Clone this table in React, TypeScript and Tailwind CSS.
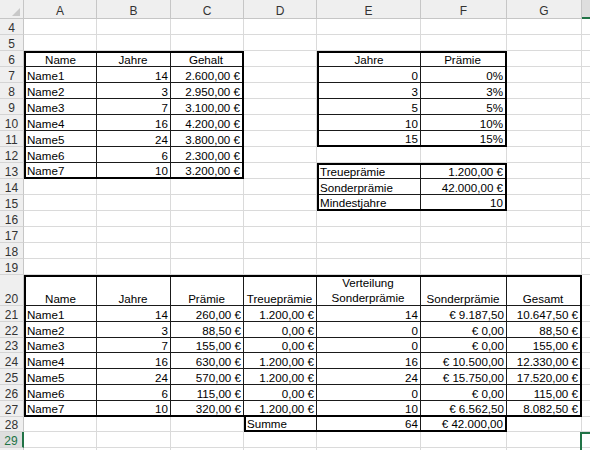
import React from "react";

type A = "l" | "r" | "c";
type Cell = { t: string; a: A; w?: boolean };

const l = (t: string): Cell => ({ t, a: "l" });
const r = (t: string): Cell => ({ t, a: "r" });
const c = (t: string): Cell => ({ t, a: "c" });

const COLS = ["A", "B", "C", "D", "E", "F", "G", "H"];
const ROWS: number[] = [];
for (let i = 4; i <= 30; i++) ROWS.push(i);

function covered(row: number, col: number) {
  if (row >= 6 && row <= 13 && col >= 1 && col <= 3) return true;
  if (row >= 6 && row <= 11 && col >= 5 && col <= 6) return true;
  if (row >= 13 && row <= 15 && col >= 5 && col <= 6) return true;
  if (row >= 20 && row <= 27 && col >= 1 && col <= 7) return true;
  if (row === 28 && col >= 4 && col <= 6) return true;
  return false;
}

const t1: Cell[][] = [
  [c("Name"), c("Jahre"), c("Gehalt")],
  [l("Name1"), r("14"), r("2.600,00 €")],
  [l("Name2"), r("3"), r("2.950,00 €")],
  [l("Name3"), r("7"), r("3.100,00 €")],
  [l("Name4"), r("16"), r("4.200,00 €")],
  [l("Name5"), r("24"), r("3.800,00 €")],
  [l("Name6"), r("6"), r("2.300,00 €")],
  [l("Name7"), r("10"), r("3.200,00 €")],
];

const t2: Cell[][] = [
  [c("Jahre"), c("Prämie")],
  [r("0"), r("0%")],
  [r("3"), r("3%")],
  [r("5"), r("5%")],
  [r("10"), r("10%")],
  [r("15"), r("15%")],
];

const t3: Cell[][] = [
  [l("Treueprämie"), r("1.200,00 €")],
  [l("Sonderprämie"), r("42.000,00 €")],
  [l("Mindestjahre"), r("10")],
];

const t4: Cell[][] = [
  [
    c("Name"),
    c("Jahre"),
    c("Prämie"),
    c("Treueprämie"),
    { t: "Verteilung\nSonderprämie", a: "c", w: true },
    c("Sonderprämie"),
    c("Gesamt"),
  ],
  [l("Name1"), r("14"), r("260,00 €"), r("1.200,00 €"), r("14"), r("€ 9.187,50"), r("10.647,50 €")],
  [l("Name2"), r("3"), r("88,50 €"), r("0,00 €"), r("0"), r("€ 0,00"), r("88,50 €")],
  [l("Name3"), r("7"), r("155,00 €"), r("0,00 €"), r("0"), r("€ 0,00"), r("155,00 €")],
  [l("Name4"), r("16"), r("630,00 €"), r("1.200,00 €"), r("16"), r("€ 10.500,00"), r("12.330,00 €")],
  [l("Name5"), r("24"), r("570,00 €"), r("1.200,00 €"), r("24"), r("€ 15.750,00"), r("17.520,00 €")],
  [l("Name6"), r("6"), r("115,00 €"), r("0,00 €"), r("0"), r("€ 0,00"), r("115,00 €")],
  [l("Name7"), r("10"), r("320,00 €"), r("1.200,00 €"), r("10"), r("€ 6.562,50"), r("8.082,50 €")],
];

const t5: Cell[][] = [[l("Summe"), r("64"), r("€ 42.000,00")]];

function Tbl({ cls, data }: { cls: string; data: Cell[][] }) {
  const nr = data.length;
  const nc = data[0].length;
  return (
    <div className={`grid bg-white border-black ${cls}`}>
      {data.flatMap((row, ri) =>
        row.map((cell, ci) => {
          const classes = ["flex items-end overflow-hidden min-w-0 pl-[1px] pr-[2px]"];
          if (ci < nc - 1) classes.push("border-r border-r-[#1a1a1a]");
          if (ri < nr - 1) classes.push("border-b border-b-[#1a1a1a]");
          if (cell.a === "r") classes.push("justify-end text-right");
          else if (cell.a === "c") classes.push("justify-center text-center");
          else classes.push("justify-start");
          classes.push(cell.w ? "whitespace-pre-line leading-[15px]" : "whitespace-nowrap leading-[12px]");
          return (
            <div key={`${ri}-${ci}`} className={classes.join(" ")}>
              <span>{cell.t}</span>
            </div>
          );
        })
      )}
    </div>
  );
}

function Corner() {
  return (
    <div className="relative bg-[#efefef] border-r border-b border-[#c6c6c6]">
      <svg className="absolute left-0 top-0" width="24" height="19" viewBox="0 0 24 19">
        <polygon points="20,8 20,16 12,16" fill="#c8c8c8" />
      </svg>
    </div>
  );
}

export default function App() {
  const items: React.ReactNode[] = [];

  // header row
  items.push(<Corner key="corner" />);
  COLS.forEach((col) => {
    const sel = col === "H";
    items.push(
      <div
        key={`h-${col}`}
        className={
          sel
            ? "flex items-end justify-center bg-[#dedede] border-r border-[#c6c6c6] border-b-2 border-b-[#217346] text-[#217346] text-[12px] leading-[12px] pb-[1px]"
            : "flex items-end justify-center bg-[#efefef] border-r border-b border-[#c6c6c6] text-[#333] text-[12px] leading-[12px] pb-[1px]"
        }
      >
        {sel ? "" : col}
      </div>
    );
  });

  ROWS.forEach((row) => {
    const selRow = row === 29;
    items.push(
      <div
        key={`rh-${row}`}
        className={
          selRow
            ? "flex items-end justify-center bg-[#dedede] border-b border-b-[#d4d4d4] border-r-2 border-r-[#217346] text-[#217346] text-[12px] leading-[12px]"
            : "flex items-end justify-center bg-[#efefef] border-b border-b-[#d4d4d4] border-r border-r-[#c6c6c6] text-[#333] text-[12px] leading-[12px]"
        }
      >
        {row < 30 ? row : ""}
      </div>
    );
    for (let ci = 1; ci <= 8; ci++) {
      if (covered(row, ci)) continue;
      if (row === 29 && ci === 8) {
        items.push(
          <div key={`c-${row}-${ci}`} className="relative border-r border-b border-[#dadada] bg-white">
            <div className="absolute -left-[2px] top-0 w-[120px] h-[40px] border-2 border-[#217346]" />
          </div>
        );
      } else {
        items.push(<div key={`c-${row}-${ci}`} className="border-r border-b border-[#dadada] bg-white" />);
      }
    }
  });

  return (
    <div className="w-[590px] h-[450px] overflow-hidden bg-white font-['Liberation_Sans',Arial,sans-serif] text-[11.6px] text-black">
      <div className="grid w-[690px] grid-cols-[24px_73px_74px_73px_73px_104px_86px_75px_100px] grid-rows-[19px_repeat(16,16px)_31px_16px_16px_15px_16px_16px_16px_16px_15px_16px_16px]">
        <Tbl
          cls="col-start-2 col-end-5 row-start-4 row-end-12 border-2 grid-cols-[71px_74px_71px] grid-rows-[14px_16px_16px_16px_16px_16px_16px_14px]"
          data={t1}
        />
        <Tbl
          cls="col-start-6 col-end-8 row-start-4 row-end-10 border-2 grid-cols-[102px_84px] grid-rows-[14px_16px_16px_16px_16px_14px]"
          data={t2}
        />
        <Tbl
          cls="col-start-6 col-end-8 row-start-11 row-end-14 border-2 grid-cols-[102px_84px] grid-rows-[14px_16px_14px]"
          data={t3}
        />
        <Tbl
          cls="col-start-2 col-end-9 row-start-18 row-end-26 border-2 grid-cols-[71px_74px_73px_73px_104px_86px_73px] grid-rows-[29px_16px_16px_15px_16px_16px_16px_14px]"
          data={t4}
        />
        <Tbl
          cls="col-start-5 col-end-8 row-start-26 row-end-27 border-l-2 border-r-2 border-b-2 grid-cols-[71px_104px_84px] grid-rows-[13px]"
          data={t5}
        />
        {items}
      </div>
    </div>
  );
}
